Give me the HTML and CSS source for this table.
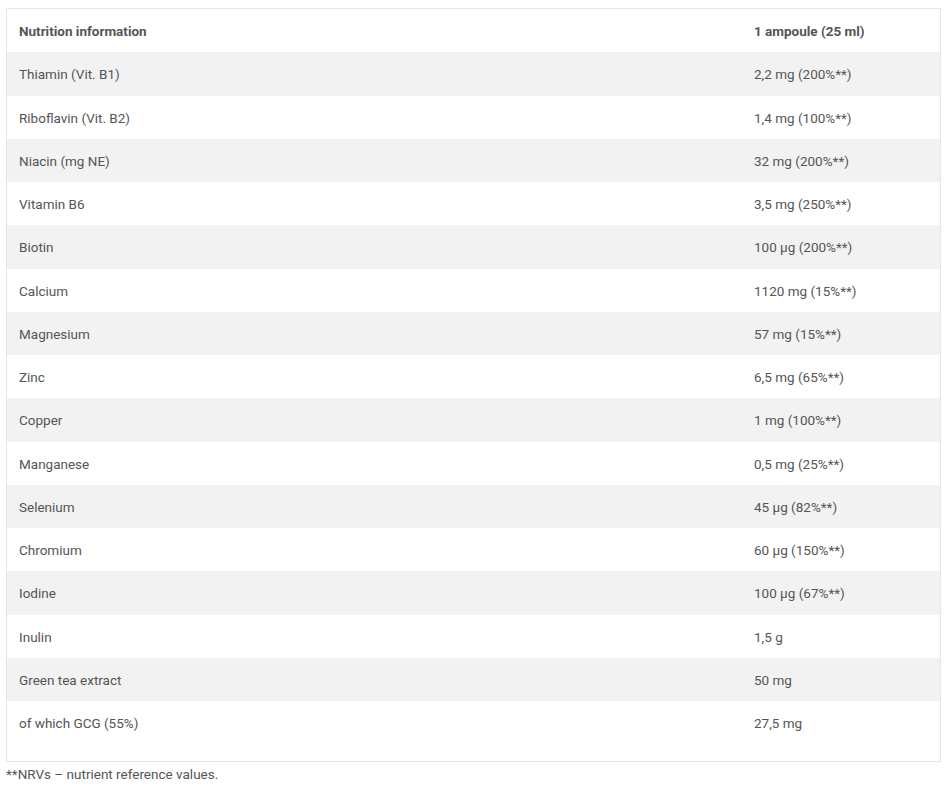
FILE: index.html
```html
<!DOCTYPE html>
<html>
<head>
<meta charset="utf-8">
<link rel="stylesheet" href="styles.css">
</head>
<body>
<div class="box">
<table class="nutri">
<thead>
<tr><th class="c1">Nutrition information</th><th>1 ampoule (25 ml)</th></tr>
</thead>
<tbody>
<tr><td>Thiamin (Vit. B1)</td><td>2,2 mg (200%**)</td></tr>
<tr><td>Riboflavin (Vit. B2)</td><td>1,4 mg (100%**)</td></tr>
<tr><td>Niacin (mg NE)</td><td>32 mg (200%**)</td></tr>
<tr><td>Vitamin B6</td><td>3,5 mg (250%**)</td></tr>
<tr><td>Biotin</td><td>100 µg (200%**)</td></tr>
<tr><td>Calcium</td><td>1120 mg (15%**)</td></tr>
<tr><td>Magnesium</td><td>57 mg (15%**)</td></tr>
<tr><td>Zinc</td><td>6,5 mg (65%**)</td></tr>
<tr><td>Copper</td><td>1 mg (100%**)</td></tr>
<tr><td>Manganese</td><td>0,5 mg (25%**)</td></tr>
<tr><td>Selenium</td><td>45 µg (82%**)</td></tr>
<tr><td>Chromium</td><td>60 µg (150%**)</td></tr>
<tr><td>Iodine</td><td>100 µg (67%**)</td></tr>
<tr><td>Inulin</td><td>1,5 g</td></tr>
<tr><td>Green tea extract</td><td>50 mg</td></tr>
<tr><td>of which GCG (55%)</td><td>27,5 mg</td></tr>
</tbody>
</table>
</div>
<p class="note">**NRVs – nutrient reference values.</p>
</body>
</html>
```
FILE: styles.css
```css
html, body {
  margin: 0;
  padding: 0;
  background: #fff;
}
body {
  padding: 8px 9px 0 6px;
  font-family: Roboto, "Liberation Sans", sans-serif;
  font-size: 13.5px;
  color: #555;
}
.box {
  border: 1px solid #e6e6e6;
  padding-bottom: 16px;
}
.nutri {
  width: 100%;
  border-collapse: collapse;
  table-layout: fixed;
}
.nutri th, .nutri td {
  text-align: left;
  padding: 13px 12px 11px;
  line-height: 19.27px;
  font-size: 13.5px;
  color: #555;
  white-space: nowrap;
}
.nutri th {
  font-weight: 700;
}
.nutri .c1 {
  width: 711px;
}
.nutri tbody tr:nth-child(odd) td {
  background: #f2f2f2;
}
.note {
  margin: 3px 0 0 0;
  line-height: 19px;
  font-size: 13.5px;
}
```
